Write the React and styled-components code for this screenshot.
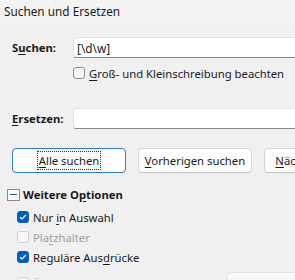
import React from "react";
import styled, { createGlobalStyle } from "styled-components";

const Global = createGlobalStyle`
  html, body { margin: 0; padding: 0; background: #f0f0f0; }
  body { font-family: "Noto Sans", "Open Sans", sans-serif; font-size: 11.3px; color: #1a1a1a; }
`;

const Window = styled.div`
  width: 295px;
  height: 280px;
  overflow: hidden;
  background: #f0f0f0;
`;

const TitleBar = styled.div`
  height: 25px;
  background: #f3f3f3;
  padding-left: 4px;
  display: flex;
  align-items: center;
  font-size: 11.8px;
  line-height: 1;
  padding-bottom: 1px;
  box-sizing: border-box;
`;

const Body = styled.div`
  padding: 12px 0 0 12px;
  width: 400px;
`;

const FieldRow = styled.div`
  display: grid;
  grid-template-columns: 61px 1fr;
  align-items: center;
  margin-top: ${(p) => p.$top || 0}px;
`;

const Label = styled.span`
  font-weight: 700;
`;

const Key = styled.span`
  text-decoration: underline;
  text-underline-offset: 2px;
`;

const Input = styled.div`
  height: 21px;
  box-sizing: border-box;
  background: #fff;
  border: 1px solid #e3e3e3;
  border-bottom-color: #8a8a8a;
  border-radius: 3px 0 0 3px;
  padding-left: 3px;
  display: flex;
  align-items: center;
  font-size: 11.8px;
`;

const CheckLine = styled.div`
  display: flex;
  align-items: center;
  gap: 4px;
  margin-left: ${(p) => p.$indent || 0}px;
  margin-top: ${(p) => p.$top || 0}px;
  color: ${(p) => (p.$disabled ? "#a0a0a0" : "#1a1a1a")};
  white-space: nowrap;
  height: 14px;
`;

const CheckText = styled.span`
  margin-right: ${(p) => p.$after || 0}px;
`;

const Box = styled.span`
  width: 12px;
  height: 12px;
  box-sizing: border-box;
  border-radius: 3px;
  flex: none;
  display: inline-flex;
  align-items: center;
  justify-content: center;
  background: ${(p) => (p.$checked ? "#005fb8" : "#f7f7f7")};
  border: 1px solid ${(p) => (p.$checked ? "#005fb8" : p.$disabled ? "#cfcfcf" : "#8d8d8d")};
`;

const ButtonRow = styled.div`
  display: flex;
  gap: 12px;
  margin-top: 19px;
`;

const Button = styled.div`
  width: 114px;
  height: 25px;
  flex: none;
  box-sizing: border-box;
  border-radius: 4px;
  background: #fdfdfd;
  border: 1px solid ${(p) => (p.$focused ? "#2f7bc9" : "#d5d5d5")};
  border-bottom-color: ${(p) => (p.$focused ? "#2f7bc9" : "#c2c2c2")};
  display: flex;
  align-items: center;
  justify-content: center;
  white-space: nowrap;
`;

const FocusRect = styled.span`
  outline: 1px dotted #333;
  padding: 1px 1px;
`;

const Expander = styled.div`
  display: flex;
  align-items: center;
  gap: 3px;
  margin-top: 15px;
  margin-left: -5px;
  font-weight: 700;
  height: 13px;
`;

const Minus = styled.span`
  width: 13px;
  height: 12px;
  box-sizing: border-box;
  border: 1px solid #8a8a8a;
  background: #fafafa;
  display: inline-flex;
  align-items: center;
  justify-content: center;
  &::after {
    content: "";
    width: 7px;
    height: 1px;
    background: #2b4f8a;
  }
`;

const Options = styled.div`
  display: flex;
  flex-direction: column;
  gap: 6px;
  margin-top: 9px;
  margin-left: 5px;
`;

const Bottom = styled.div`
  display: flex;
  justify-content: space-between;
  align-items: center;
  margin-top: 6px;
  height: 14px;
`;

const Dropdown = styled.div`
  width: 80px;
  height: 22px;
  flex: none;
  box-sizing: border-box;
  margin-right: 105px;
  background: #f8f8f8;
  border: 1px solid #e2e2e2;
  border-radius: 4px;
`;

const Check = () => (
  <svg width="8" height="6" viewBox="0 0 8 6">
    <path d="M1 3.2 L3 5 L7 1" fill="none" stroke="#fff" strokeWidth="1.2" />
  </svg>
);

const Cb = ({ checked, disabled }) => (
  <Box $checked={checked} $disabled={disabled}>{checked && <Check />}</Box>
);

export default function App() {
  return (
    <Window>
      <Global />
      <TitleBar>Suchen und Ersetzen</TitleBar>
      <Body>
        <FieldRow>
          <Label>S<Key>u</Key>chen:</Label>
          <Input>[\d\w]</Input>
        </FieldRow>
        <CheckLine $indent={61} $top={8}>
          <Cb />
          <CheckText $after={8}><Key>G</Key>roß- und Kleinschreibung beachten</CheckText>
          <Cb />
        </CheckLine>
        <FieldRow $top={28}>
          <Label><Key>E</Key>rsetzen:</Label>
          <Input />
        </FieldRow>
        <ButtonRow>
          <Button $focused><FocusRect><Key>A</Key>lle suchen</FocusRect></Button>
          <Button><span><Key>V</Key>orherigen suchen</span></Button>
          <Button><span><Key>N</Key>ächsten suchen</span></Button>
        </ButtonRow>
        <Expander>
          <Minus />
          <span>Weitere O<Key>p</Key>tionen</span>
        </Expander>
        <Options>
          <CheckLine>
            <Cb checked />
            <CheckText>Nur <Key>i</Key>n Auswahl</CheckText>
          </CheckLine>
          <CheckLine $disabled>
            <Cb disabled />
            <CheckText>Pla<Key>t</Key>zhalter</CheckText>
          </CheckLine>
          <CheckLine>
            <Cb checked />
            <CheckText>Reguläre Aus<Key>d</Key>rücke</CheckText>
          </CheckLine>
          <Bottom>
            <CheckLine $disabled>
              <Cb disabled />
              <CheckText>Ähnlichkeitssuche</CheckText>
            </CheckLine>
            <Dropdown />
          </Bottom>
        </Options>
      </Body>
    </Window>
  );
}
